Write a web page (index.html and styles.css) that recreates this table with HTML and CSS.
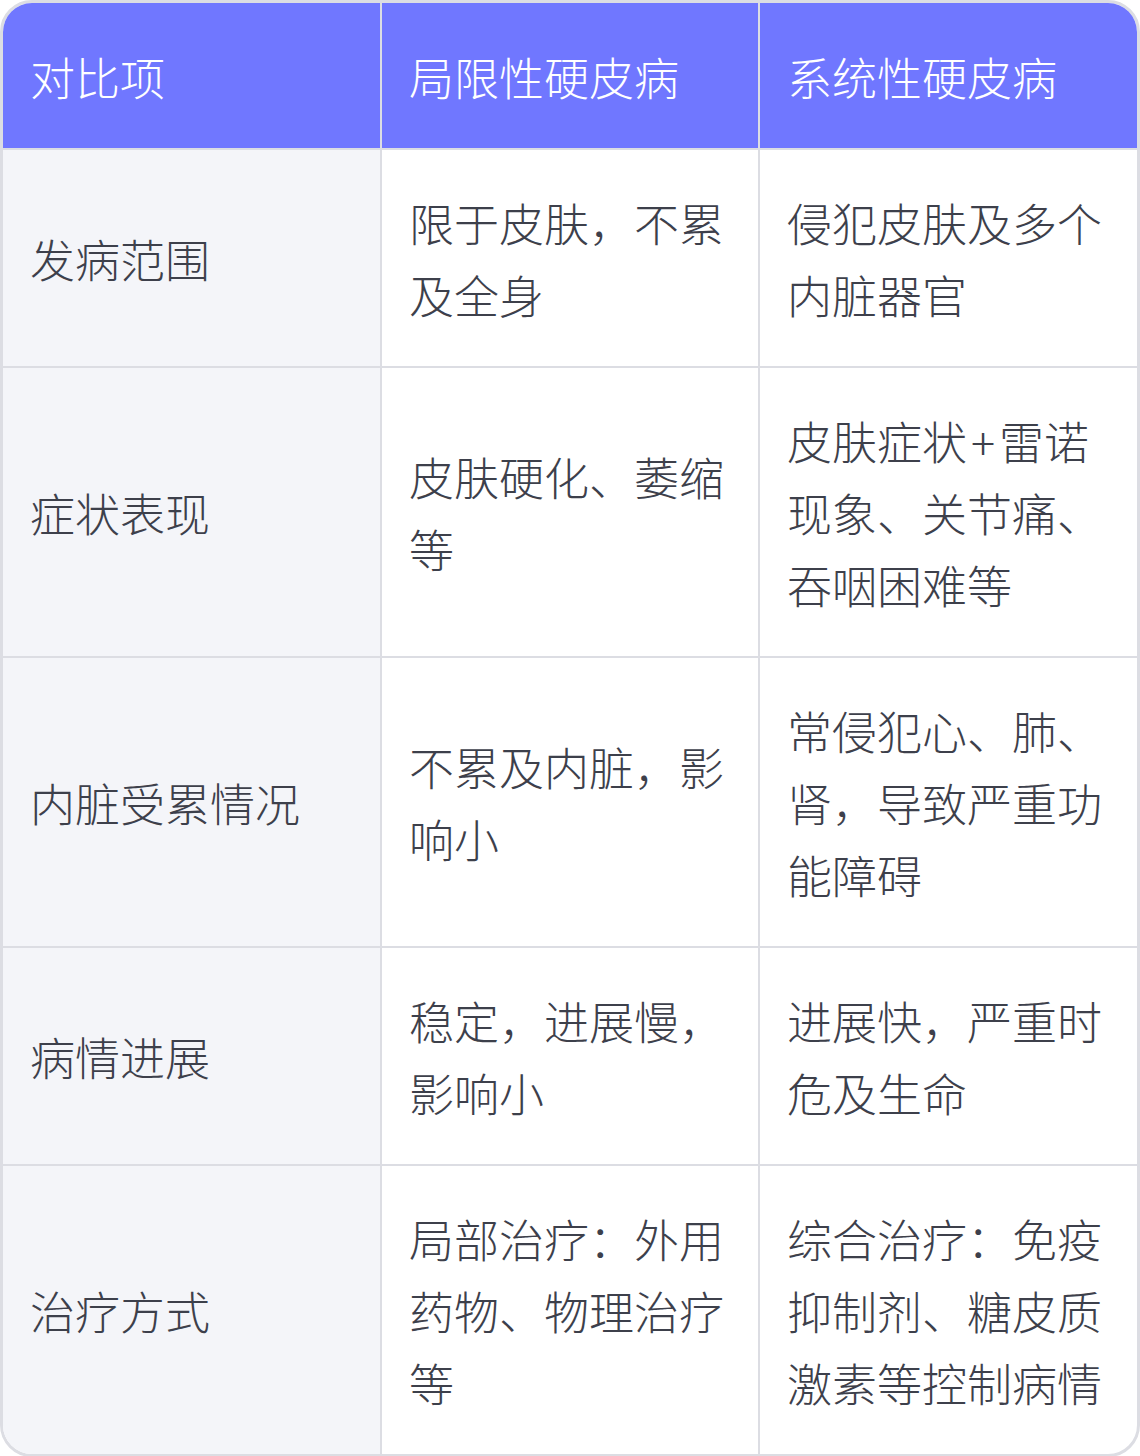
FILE: index.html
```html
<!DOCTYPE html>
<html lang="zh">
<head>
<meta charset="utf-8">
<link rel="stylesheet" href="styles.css">
</head>
<body>
<div class="card">
  <table class="cmp">
    <thead>
      <tr>
        <th>对比项</th>
        <th>局限性硬皮病</th>
        <th>系统性硬皮病</th>
      </tr>
    </thead>
    <tbody>
      <tr>
        <td class="key">发病范围</td>
        <td>限于皮肤，不累及全身</td>
        <td>侵犯皮肤及多个内脏器官</td>
      </tr>
      <tr>
        <td class="key">症状表现</td>
        <td>皮肤硬化、萎缩等</td>
        <td>皮肤症状<span class="op">+</span>雷诺现象、关节痛、吞咽困难等</td>
      </tr>
      <tr>
        <td class="key">内脏受累情况</td>
        <td>不累及内脏，影响小</td>
        <td>常侵犯心、肺、肾，导致严重功能障碍</td>
      </tr>
      <tr>
        <td class="key">病情进展</td>
        <td>稳定，进展慢，影响小</td>
        <td>进展快，严重时危及生命</td>
      </tr>
      <tr>
        <td class="key">治疗方式</td>
        <td>局部治疗：外用药物、物理治疗等</td>
        <td>综合治疗：免疫抑制剂、糖皮质激素等控制病情</td>
      </tr>
    </tbody>
  </table>
</div>
</body>
</html>
```

FILE: styles.css
```css
html, body {
  margin: 0;
  padding: 0;
  background: #ffffff;
}

.card {
  width: 1140px;
  box-sizing: border-box;
  border: 3px solid #dcdde3;
  border-radius: 32px;
  overflow: hidden;
  background: #ffffff;
}

.cmp {
  width: 100%;
  border-collapse: collapse;
  table-layout: fixed;
  font-family: "Noto Sans CJK SC", "Noto Sans", sans-serif;
  font-weight: 300;
  font-size: 45px;
  line-height: 72px;
  color: #3d404b;
}

.cmp th,
.cmp td {
  padding: 37px 28px 35px 27px;
  text-align: left;
  vertical-align: middle;
  border: 2px solid #dcdde3;
}

.cmp tr > :first-child { border-left: none; }
.cmp tr > :last-child { border-right: none; }
.cmp thead tr > * { border-top: none; }
.cmp tbody tr:last-child > * { border-bottom: none; }

.cmp th {
  background: #7077ff;
  color: #ffffff;
  font-weight: 300;
  padding-top: 38px;
  padding-bottom: 35px;
}

.cmp td.key {
  background: #f4f5f9;
}

.op {
  margin: 0 4px;
}
```
